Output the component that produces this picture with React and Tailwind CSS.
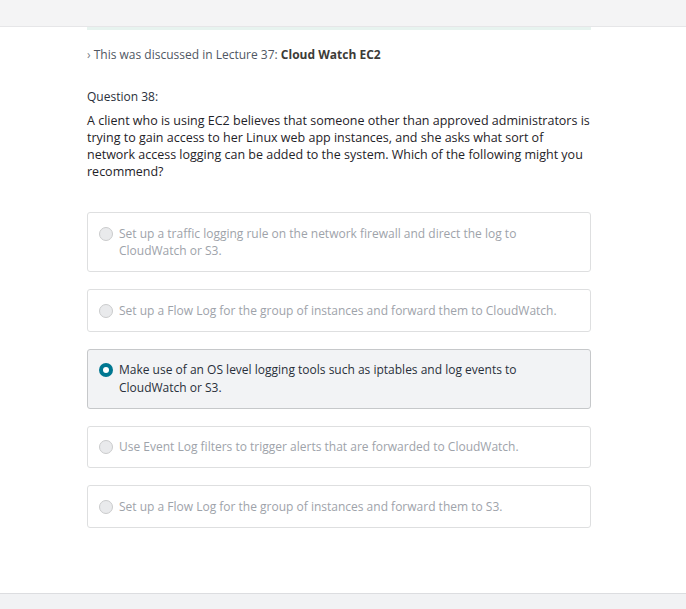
const options = [
  { text: "Set up a traffic logging rule on the network firewall and direct the log to CloudWatch or S3." },
  { text: "Set up a Flow Log for the group of instances and forward them to CloudWatch." },
  { text: "Make use of an OS level logging tools such as iptables and log events to CloudWatch or S3.", selected: true },
  { text: "Use Event Log filters to trigger alerts that are forwarded to CloudWatch." },
  { text: "Set up a Flow Log for the group of instances and forward them to S3." },
];

function Radio({ checked }) {
  if (checked) {
    return (
      <span className="mt-[2px] flex h-[14px] w-[14px] shrink-0 items-center justify-center rounded-full bg-[#007791]">
        <span className="h-[6px] w-[6px] rounded-full bg-white" />
      </span>
    );
  }
  return (
    <span className="mt-[2px] h-[14px] w-[14px] shrink-0 rounded-full border border-[#cacbcc] bg-[#e9eaec]" />
  );
}

function Option({ text, selected }) {
  return (
    <div
      className={
        "flex gap-[6px] rounded-[3px] border py-[11.5px] pl-[11px] pr-4 text-[12px] leading-[17.5px] " +
        (selected
          ? "border-[#c6c8ca] bg-[#f2f3f5] text-[#29303b]"
          : "border-[#dedfe0] bg-white text-[#9ea3aa]")
      }
    >
      <Radio checked={selected} />
      <span className="max-w-[445px]">{text}</span>
    </div>
  );
}

export default function App() {
  return (
    <div className="min-h-[609px] bg-white font-['Open_Sans',sans-serif]">
      <div className="h-[27px] border-b border-[#e6e6e8] bg-[#f4f4f5]" />
      <div className="ml-[87px] w-[504px]">
        <div className="h-[3px] bg-[#e7f3ef]" />

        <p className="mt-[16px] text-[12px] leading-[17px] text-[#505763]">
          <span className="text-[#7a7f86]">›</span> This was discussed in Lecture 37:{" "}
          <span className="font-bold text-[#3c3b37]">Cloud Watch EC2</span>
        </p>

        <p className="mt-[25px] text-[12px] leading-[17px] text-[#29303b]">Question 38:</p>

        <p className="mt-[7px] text-[12.5px] leading-[17px] text-[#1f2329]">
          A client who is using EC2 believes that someone other than approved administrators is
          trying to gain access to her Linux web app instances, and she asks what sort of network
          access logging can be added to the system. Which of the following might you recommend?
        </p>

        <div className="mt-[32px] flex flex-col gap-[17px] pb-[65px]">
          {options.map((o, i) => (
            <Option key={i} text={o.text} selected={o.selected} />
          ))}
        </div>
      </div>
      <div className="h-[17px] border-t border-[#dcdde0] bg-[#f1f2f4]" />
    </div>
  );
}
